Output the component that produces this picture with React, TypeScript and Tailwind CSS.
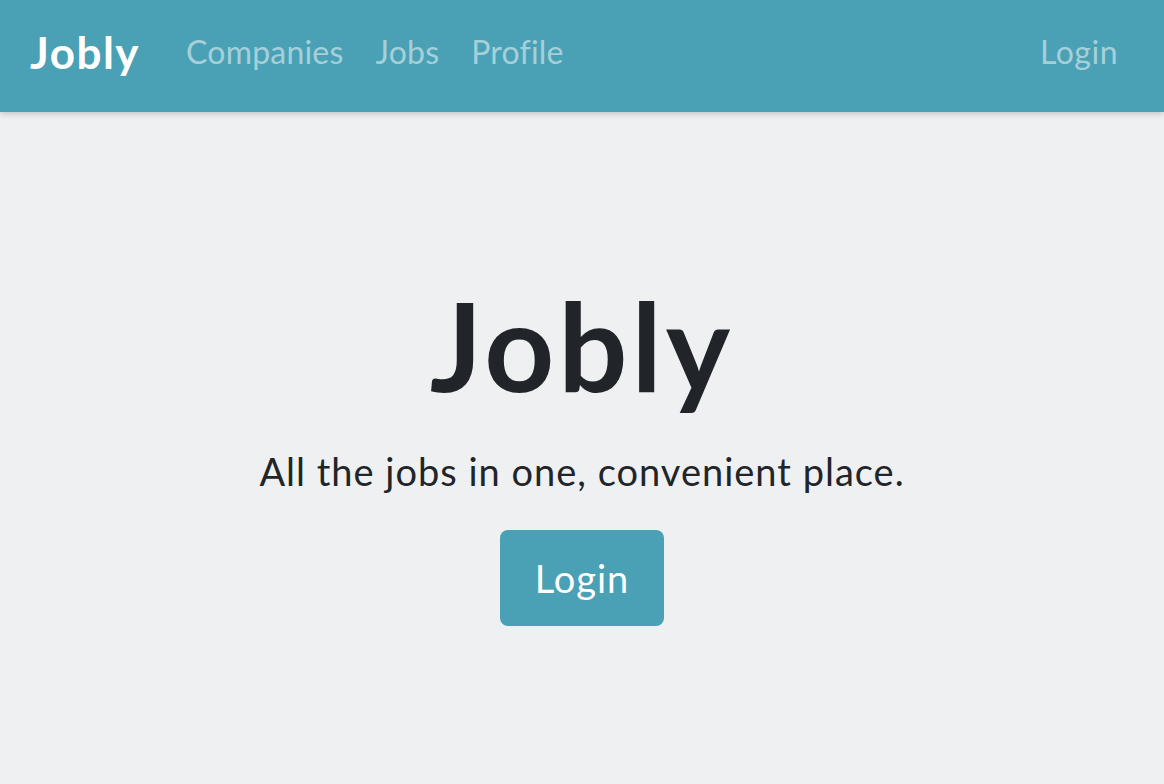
import React from "react"

const font = { fontFamily: "Lato, 'Open Sans', sans-serif" }

function NavBar() {
  return (
    <nav className="relative z-10 h-[112px] bg-[#4aa1b5] flex items-center px-[30px] pb-[8px] shadow-[0_2px_6px_rgba(0,0,0,0.18)]">
      <a className="text-white font-bold text-[44px] leading-none tracking-[1.5px] mr-[46px]">Jobly</a>
      <div className="flex items-center gap-[32px] text-[32px] tracking-[0.2px] text-[#a5d0da]">
        <a>Companies</a>
        <a>Jobs</a>
        <a>Profile</a>
      </div>
      <a className="ml-auto mr-[16px] text-[32px] tracking-[0.5px] text-[#a5d0da]">Login</a>
    </nav>
  )
}

export default function App() {
  return (
    <div className="min-h-[784px] bg-[#eff0f2] text-[#212529] overflow-hidden" style={font}>
      <NavBar />

      {/* Hero */}
      <main className="flex flex-col items-center pt-[172px]">
        <h1 className="font-bold text-[122px] leading-none tracking-[4px]">Jobly</h1>
        <p className="mt-[46px] text-[38px] leading-none tracking-[1px]">All the jobs in one, convenient place.</p>
        <button className="mt-[40px] w-[164px] h-[96px] rounded-[8px] bg-[#4aa1b5] text-white text-[38px] tracking-[1px]">
          Login
        </button>
      </main>
    </div>
  )
}
